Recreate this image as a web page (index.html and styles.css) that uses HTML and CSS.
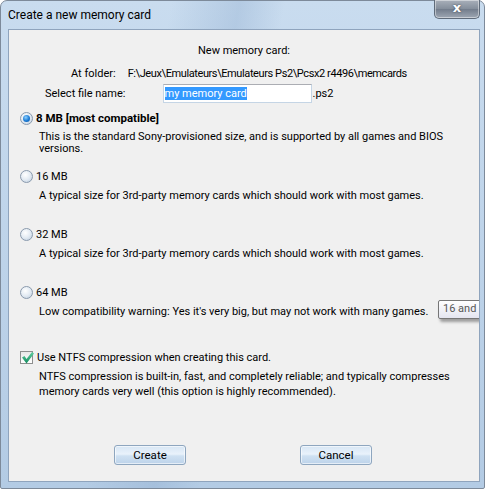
FILE: index.html
```html
<!DOCTYPE html>
<html lang="en">
<head>
    <meta charset="UTF-8">
    <title>Create a new memory card</title>
    <link rel="stylesheet" href="styles.css">
</head>
<body>
    <div class="window">
        <div class="title-bar">
            <span class="title-text">Create a new memory card</span>
            <span class="close-button">x</span>
        </div>

        <div class="client">
            <p class="heading">New memory card:</p>

            <div class="folder-row">
                <span>At folder:</span>
                <span class="folder-path">F:\Jeux\Emulateurs\Emulateurs Ps2\Pcsx2 r4496\memcards</span>
            </div>

            <div class="file-row">
                <span>Select file name:</span>
                <div class="text-box"><span class="selected-text">my memory card</span></div>
                <span>.ps2</span>
            </div>

            <div class="option option-first">
                <div class="option-head">
                    <span class="radio checked"></span>
                    <b>8 MB [most compatible]</b>
                </div>
                <p class="option-desc tight">This is the standard Sony-provisioned size, and is supported by all games and BIOS versions.</p>
            </div>

            <div class="option option-second">
                <div class="option-head">
                    <span class="radio"></span>
                    <span>16 MB</span>
                </div>
                <p class="option-desc">A typical size for 3rd-party memory cards which should work with most games.</p>
            </div>

            <div class="option">
                <div class="option-head">
                    <span class="radio"></span>
                    <span>32 MB</span>
                </div>
                <p class="option-desc">A typical size for 3rd-party memory cards which should work with most games.</p>
            </div>

            <div class="option">
                <div class="option-head">
                    <span class="radio"></span>
                    <span>64 MB</span>
                </div>
                <p class="option-desc">Low compatibility warning: Yes it's very big, but may not work with many games.</p>
            </div>

            <div class="option option-ntfs">
                <div class="option-head">
                    <span class="checkbox">
                        <svg width="13" height="13" viewBox="0 0 13 13">
                            <defs>
                                <linearGradient id="tick" x1="0" y1="0" x2="0" y2="1">
                                    <stop offset="0" stop-color="#5fd0a0"/>
                                    <stop offset="1" stop-color="#138a5e"/>
                                </linearGradient>
                            </defs>
                            <path d="M1 6.5 L3.5 5 L5.5 8 L11 1 L13 2.5 L5.5 12.5 Z" fill="url(#tick)"/>
                        </svg>
                    </span>
                    <span class="check-label">Use NTFS compression when creating this card.</span>
                </div>
                <p class="option-desc">NTFS compression is built-in, fast, and completely reliable; and typically compresses memory cards very well (this option is highly recommended).</p>
            </div>

            <div class="button-row">
                <span class="button">Create</span>
                <span class="button">Cancel</span>
            </div>

            <!-- tooltip left over from hovering the 16/32 MB text -->
            <div class="tooltip">16 and 32 MB cards</div>
        </div>
    </div>
</body>
</html>
```

FILE: styles.css
```css
:root {
    --client-bg: #f0f0f0;
    --text: #000000;
    --frame-top: #c9dcef;
    --frame-bottom: #b3cbe4;
    --ui-font: Roboto, 'Noto Sans', sans-serif;
}

body {
    margin: 0;
    background: #ffffff;
    font-family: var(--ui-font);
    font-size: 11px;
    color: var(--text);
}

p {
    margin: 0;
}

.window {
    width: 485px;
    height: 489px;
    box-sizing: border-box;
    padding: 0 4px 6px 7px;
    border: 1px solid #7d8a9a;
    border-radius: 7px 7px 2px 2px;
    background:
        linear-gradient(100deg, rgba(255, 255, 255, 0.0) 30%, rgba(140, 170, 205, 0.35) 42%, rgba(255, 255, 255, 0.0) 50%),
        linear-gradient(to bottom, var(--frame-top), var(--frame-bottom));
    display: flex;
    flex-direction: column;
}

.title-bar {
    height: 28px;
    display: flex;
    justify-content: space-between;
    align-items: flex-start;
}

.title-text {
    font-size: 12px;
    margin-top: 7px;
}

.close-button {
    width: 46px;
    height: 19px;
    margin-top: -1px;
    box-sizing: border-box;
    border: 1px solid #5f6b7a;
    border-top: none;
    border-radius: 0 0 5px 5px;
    background: linear-gradient(to bottom, #a9b0ba 0%, #858f9c 48%, #737d8c 52%, #9ea7b3 100%);
    box-shadow: inset 0 0 0 1px rgba(255, 255, 255, 0.45);
    color: #ffffff;
    font-family: 'DejaVu Sans', sans-serif;
    font-size: 13px;
    font-weight: bold;
    line-height: 16px;
    text-align: center;
    text-shadow: 0 0 2px #3b4450;
}

.client {
    position: relative;
    flex: 1;
    overflow: hidden;
    background: var(--client-bg);
    border: 1px solid #8fa4bd;
    padding: 13px 0 0 0;
}

.heading {
    line-height: 15px;
    text-align: center;
}

.folder-row {
    margin-top: 8px;
    margin-left: 62px;
    line-height: 15px;
    display: flex;
    gap: 12px;
}

.folder-path {
    letter-spacing: -0.4px;
}

.file-row {
    margin-top: 3px;
    margin-left: 36px;
    display: flex;
    align-items: center;
    height: 19px;
}

.text-box {
    width: 149px;
    height: 19px;
    box-sizing: border-box;
    margin-left: 37px;
    margin-right: 1px;
    padding: 2px 1px;
    background: #ffffff;
    border: 1px solid #c5d5e5;
    border-top-color: #abadb3;
    line-height: 14px;
}

.selected-text {
    background: #3399ff;
    color: #ffffff;
}

.option {
    margin-top: 24px;
}

.option-first {
    margin-top: 8px;
}

.option-second {
    margin-top: 14px;
}

.option-ntfs {
    margin-top: 31px;
}

.option-head {
    margin-left: 11px;
    display: flex;
    align-items: center;
    gap: 3px;
    line-height: 15px;
}

.option-head b {
    font-size: 11.5px;
}

.option-desc {
    margin-top: 4px;
    margin-left: 30px;
    margin-right: 20px;
    line-height: 15px;
}

.tight {
    margin-top: 5px;
    margin-right: 32px;
    line-height: 12px;
}

.radio {
    width: 13px;
    height: 13px;
    box-sizing: border-box;
    border-radius: 50%;
    border: 1px solid #8a9aad;
    background: radial-gradient(circle at 40% 35%, #ffffff 0%, #e3ebf3 50%, #bccbdc 100%);
    display: flex;
    align-items: center;
    justify-content: center;
}

.radio.checked::after {
    content: '';
    width: 7px;
    height: 7px;
    border-radius: 50%;
    background: radial-gradient(circle at 40% 35%, #8cd0ff 0%, #1a7ad4 55%, #0a4f9c 100%);
}

.checkbox {
    width: 13px;
    height: 13px;
    box-sizing: border-box;
    border: 1px solid #8e8f8f;
    background: linear-gradient(to bottom, #e8e8e8, #ffffff);
    position: relative;
}

.checkbox svg {
    position: absolute;
    left: 0;
    top: -1px;
}

.check-label {
    margin-left: 1px;
}

.button-row {
    margin-top: 46px;
    display: flex;
    padding-left: 105px;
    gap: 114px;
}

.button {
    width: 72px;
    height: 20px;
    box-sizing: border-box;
    border: 1px solid #8ea6bf;
    border-radius: 3px;
    background: linear-gradient(to bottom, #d7e6f4 0%, #e9f2fb 45%, #cfe1f2 55%, #bdd3ea 100%);
    box-shadow: inset 0 0 0 1px rgba(255, 255, 255, 0.6);
    text-align: center;
    line-height: 18px;
    font-size: 11.5px;
}

.tooltip {
    position: absolute;
    left: 429px;
    top: 270px;
    padding: 0 6px 0 4px;
    height: 17px;
    line-height: 16px;
    white-space: nowrap;
    border: 1px solid #767676;
    border-radius: 2px;
    background: linear-gradient(to bottom, #ffffff, #e4e5f0);
    box-shadow: 2px 3px 3px rgba(0, 0, 0, 0.35);
    color: #575757;
    font-size: 11px;
}
```
